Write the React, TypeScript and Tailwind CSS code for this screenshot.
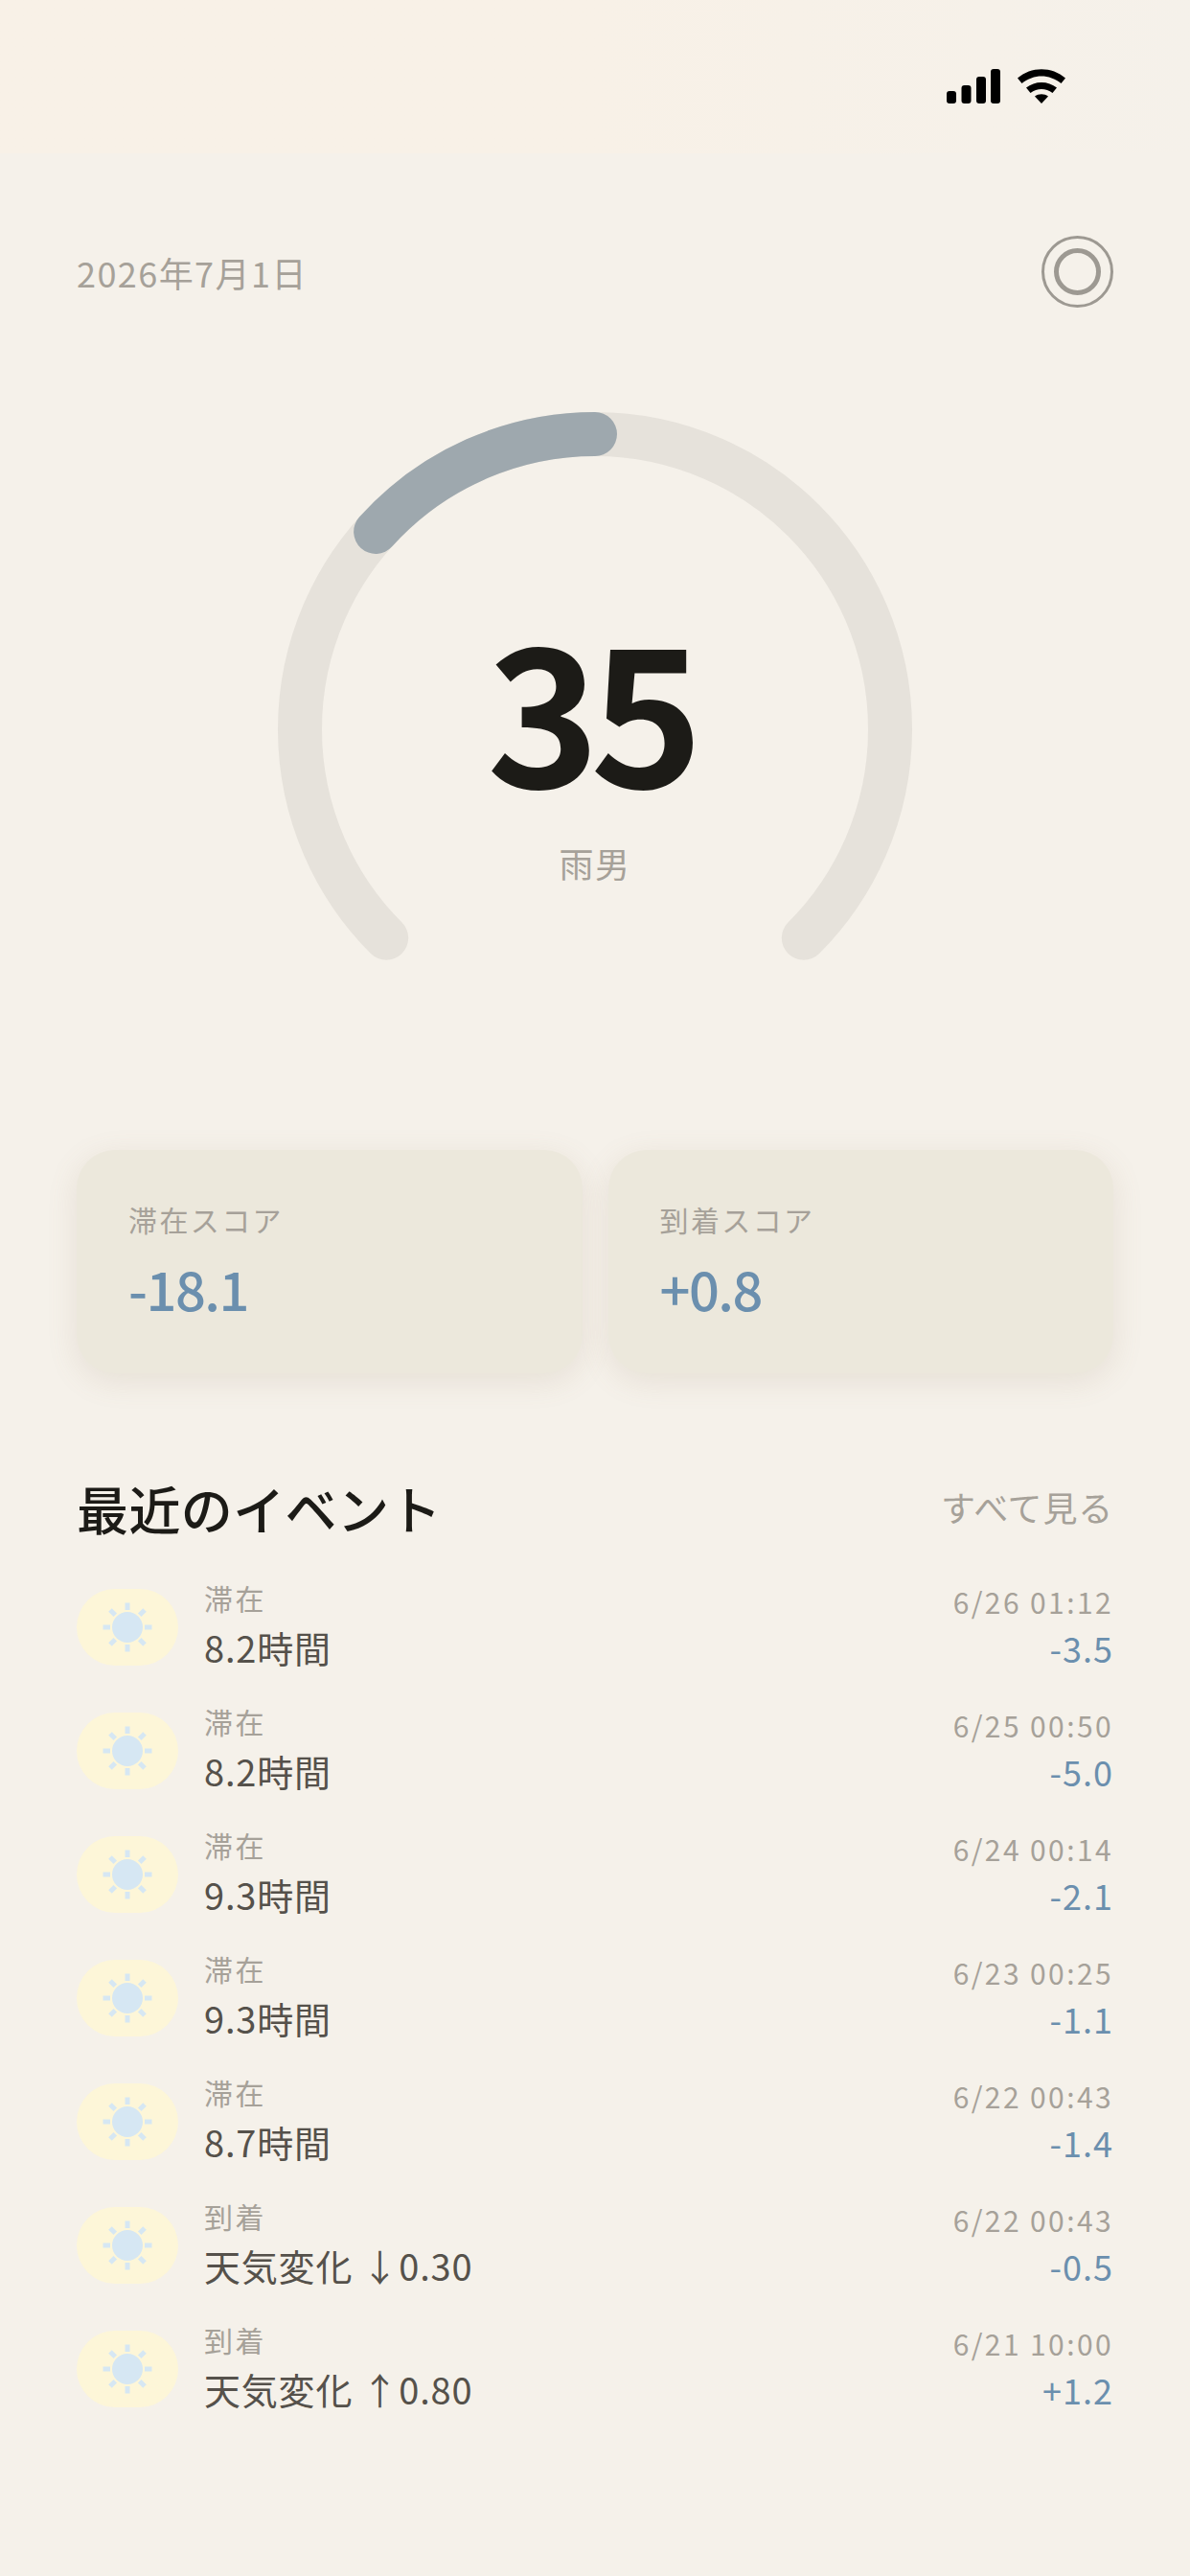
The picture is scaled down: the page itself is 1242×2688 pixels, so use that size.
const events = [
  { type: "滞在", label: "8.2時間", date: "6/26 01:12", score: "-3.5" },
  { type: "滞在", label: "8.2時間", date: "6/25 00:50", score: "-5.0" },
  { type: "滞在", label: "9.3時間", date: "6/24 00:14", score: "-2.1" },
  { type: "滞在", label: "9.3時間", date: "6/23 00:25", score: "-1.1" },
  { type: "滞在", label: "8.7時間", date: "6/22 00:43", score: "-1.4" },
  { type: "到着", label: "天気変化 ↓0.30", date: "6/22 00:43", score: "-0.5" },
  { type: "到着", label: "天気変化 ↑0.80", date: "6/21 10:00", score: "+1.2" },
];

function polar(cx: number, cy: number, r: number, deg: number) {
  const rad = (deg * Math.PI) / 180;
  return [cx + r * Math.sin(rad), cy - r * Math.cos(rad)];
}

function arc(cx: number, cy: number, r: number, from: number, to: number) {
  const [x1, y1] = polar(cx, cy, r, from);
  const [x2, y2] = polar(cx, cy, r, to);
  const large = to - from > 180 ? 1 : 0;
  return `M ${x1} ${y1} A ${r} ${r} 0 ${large} 1 ${x2} ${y2}`;
}

function SignalIcon() {
  return (
    <svg width="56" height="36" viewBox="0 0 56 36" fill="#000">
      <rect x="0" y="23" width="10" height="13" rx="3" />
      <rect x="15.5" y="17" width="10" height="19" rx="3" />
      <rect x="31" y="8" width="10" height="28" rx="3" />
      <rect x="46" y="0" width="10" height="36" rx="3" />
    </svg>
  );
}

function WifiIcon() {
  return (
    <svg width="50" height="36" viewBox="0 0 50 36" fill="#000">
      <path d="M0 9.5 C14 -3 36 -3 50 9.5 L45.5 15 C33 5 17 5 4.5 15 Z" />
      <path d="M9 19.5 C18 12 32 12 41 19.5 L36.5 25 C29.5 19.5 20.5 19.5 13.5 25 Z" />
      <path d="M18 28.5 C22 25.5 28 25.5 32 28.5 L25 36 Z" />
    </svg>
  );
}

function SunIcon() {
  return (
    <svg width="52" height="52" viewBox="-26 -26 52 52" fill="#d6e7f3">
      <circle r="16" />
      {[0, 45, 90, 135, 180, 225, 270, 315].map((deg) => (
        <rect key={deg} x="-2.5" y="-25.5" width="5" height="7.5" transform={`rotate(${deg})`} />
      ))}
    </svg>
  );
}

function ScoreCard({ title, value }: { title: string; value: string }) {
  return (
    <div className="flex-1 h-[233px] rounded-[40px] bg-[#ece8dc] pl-[54px] pt-[50px] shadow-[0_8px_32px_rgba(150,120,90,0.14)]">
      <div className="text-[30px] leading-[44px] tracking-[2.4px] text-[#a6a199]">{title}</div>
      <div className="mt-[10px] text-[56px] leading-[80px] tracking-[-1.5px] font-medium text-[#6b8fae]">{value}</div>
    </div>
  );
}

export default function App() {
  return (
    <div className="w-[1242px] h-[2688px] bg-[#f5f1ea] font-['Noto_Sans_CJK_JP',sans-serif] overflow-hidden">
      {/* status bar */}
      <div className="h-[160px] bg-gradient-to-r from-[#f8f1e7] via-[#f8f1e7] to-[#f5f1ea] flex justify-end items-start pt-[72px] pr-[130px] gap-[18px]">
        <SignalIcon />
        <WifiIcon />
      </div>

      <div className="px-[80px]">
        {/* header */}
        <div className="mt-[86px] h-[75px] flex items-center justify-between">
          <span className="text-[36px] leading-[52px] tracking-[1.44px] text-[#a6a199]">2026年7月1日</span>
          <svg width="75" height="75" viewBox="0 0 75 75" fill="none" stroke="#9d9992">
            <circle cx="37.5" cy="37.5" r="36" strokeWidth="3" />
            <circle cx="37.5" cy="37.5" r="22" strokeWidth="5" />
          </svg>
        </div>

        {/* gauge */}
        <div className="relative mt-[109px] h-[770px] flex justify-center">
          <svg width="662" height="580" viewBox="0 0 662 580" fill="none" strokeLinecap="round" strokeWidth="46">
            <path d={arc(331, 331, 308, -135, 135)} stroke="#e6e2db" />
            <path d={arc(331, 331, 308, -48, 0)} stroke="#9ea8ae" />
          </svg>
          <div className="absolute inset-x-0 top-[215px] flex flex-col items-center">
            <div className="pr-[10px] text-[200px] leading-[180px] tracking-[-10px] font-bold text-[#1c1b17]">35</div>
            <div className="mt-[49px] text-[36px] leading-[52px] tracking-[1.44px] text-[#a6a199]">雨男</div>
          </div>
        </div>

        {/* scores */}
        <div className="flex gap-[27px]">
          <ScoreCard title="滞在スコア" value="-18.1" />
          <ScoreCard title="到着スコア" value="+0.8" />
        </div>

        {/* recent events */}
        <div className="mt-[103px] flex items-center justify-between h-[76px]">
          <h2 className="text-[54px] leading-[76px] tracking-[0.4px] font-medium text-[#1c1b17]">最近のイベント</h2>
          <span className="mb-[5px] text-[36px] leading-[50px] tracking-[0.8px] text-[#a6a199]">すべて見る</span>
        </div>
        <div className="mt-[21px]">
          {events.map((e, i) => (
            <div key={i} className="h-[129px] flex items-center">
              <div className="w-[106px] h-[80px] rounded-[40px] bg-[#fdf6d8] flex items-center justify-center">
                <SunIcon />
              </div>
              <div className="ml-[27px] flex-1">
                <div className="mt-[-5px] text-[30px] leading-[44px] tracking-[2.4px] text-[#a6a199]">{e.type}</div>
                <div className="mt-[3px] text-[38px] leading-[54px] tracking-[0.8px] text-[#55514b]">{e.label}</div>
              </div>
              <div className="pb-[2px] text-right">
                <div className="text-[30px] leading-[44px] tracking-[2.4px] text-[#a6a199]">{e.date}</div>
                <div className="text-[36px] leading-[52px] tracking-[1px] text-[#6b8fae]">{e.score}</div>
              </div>
            </div>
          ))}
        </div>
      </div>
    </div>
  );
}
